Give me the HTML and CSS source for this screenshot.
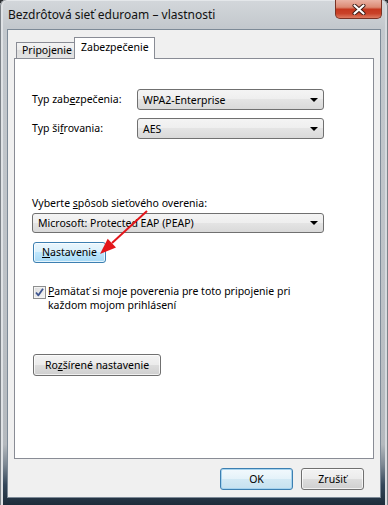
FILE: index.html
```html
<!DOCTYPE html>
<html lang="sk">
<head>
<meta charset="utf-8">
<title>Bezdrôtová sieť eduroam – vlastnosti</title>
<link rel="stylesheet" href="styles.css">
</head>
<body>
<div class="window">
  <div class="titlebar">
    <span class="title">Bezdrôtová sieť eduroam – vlastnosti</span>
    <div class="close">
      <svg width="14" height="11" viewBox="0 0 14 11"><path d="M2.5 1.5 L11.5 9.5 M11.5 1.5 L2.5 9.5" stroke="#3a1a14" stroke-width="4" stroke-linecap="round" fill="none"/><path d="M2.5 1.5 L11.5 9.5 M11.5 1.5 L2.5 9.5" stroke="#ffffff" stroke-width="2.2" stroke-linecap="round" fill="none"/></svg>
    </div>
  </div>
  <div class="client">
    <div class="tabs">
      <div class="tab">Pripojenie</div>
      <div class="tab active">Zabezpečenie</div>
    </div>
    <div class="panel">
      <div class="form-grid">
        <span class="label">Typ zab<u>e</u>zpečenia:</span>
        <div class="select">WPA2-Enterprise<span class="caret"></span></div>
        <span class="label">Typ ši<u>f</u>rovania:</span>
        <div class="select">AES<span class="caret"></span></div>
      </div>
      <div class="auth-label">Vyberte <u>s</u>pôsob sieťového overenia:</div>
      <div class="select wide">Microsoft: Protected EAP (PEAP)<span class="caret"></span></div>
      <div class="btn hot settings"><u>N</u>astavenie</div>
      <div class="check">
        <span class="box"><svg width="11" height="11" viewBox="0 0 11 11"><path d="M2 5.5 L4.4 8.3 L9 1.8" stroke="#3e5590" stroke-width="1.8" fill="none" stroke-linejoin="round"/></svg></span>
        <span class="check-text">
          <span class="line"><u>P</u>amätať si moje poverenia pre toto pripojenie pri</span>
          <span class="line">každom mojom prihlásení</span>
        </span>
      </div>
      <div class="btn advanced">Ro<u>z</u>šírené nastavenie</div>
      <svg class="arrow" width="60" height="56" viewBox="0 0 60 56">
        <path d="M52 7 L17 39" stroke="#e3161b" stroke-width="2" fill="none"/>
        <path d="M5 50 L21 43.6 L12.7 34.8 Z" fill="#e3161b"/>
      </svg>
    </div>
    <div class="actions">
      <div class="btn default ok">OK</div>
      <div class="btn cancel">Zrušiť</div>
    </div>
  </div>
</div>
</body>
</html>
```
FILE: styles.css
```css
html, body {
  margin: 0;
  padding: 0;
  background: #2b2f33;
}
body {
  font-family: "Noto Sans", "Open Sans", sans-serif;
  font-size: 10.5px;
  color: #000;
}
.window {
  width: 388px;
  height: 505px;
  box-sizing: border-box;
  display: flex;
  flex-direction: column;
  border-radius: 6px 6px 0 0;
  background: linear-gradient(to bottom, #d3d7db 0px, #c3c8cd 28px, #bcc1c6 60%, #b4b9be 88%, #7d8893 92%, #34475a 96%, #1d2c3a 100%);
  box-shadow: inset 1px 0 0 #7c8288, inset -1px 0 0 #7c8288, inset 0 1px 0 #e4e7ea, inset 3px 0 0 #dfe2e5, inset -3px 0 0 #d6dade;
}
.titlebar {
  height: 29px;
  display: flex;
  align-items: flex-start;
  padding: 0 6px 0 8px;
  flex-shrink: 0;
}
.title {
  font-size: 12px;
  line-height: 14px;
  padding-top: 8px;
  color: #111;
}
.close {
  margin-left: auto;
  width: 47px;
  height: 19px;
  box-sizing: border-box;
  border: 1px solid #7a3224;
  border-top: none;
  border-radius: 0 0 5px 5px;
  background: linear-gradient(to bottom, #eab2a4 0%, #dc8a74 40%, #c5381f 52%, #c94228 75%, #dd7a60 100%);
  display: flex;
  align-items: center;
  justify-content: center;
}
.client {
  flex: 1;
  margin: 0 7px 7px;
  box-sizing: border-box;
  border: 1px solid #7d8a97;
  background: #f0f0f0;
  padding: 7px 6px 0;
  display: flex;
  flex-direction: column;
}
.tabs {
  display: flex;
  align-items: flex-end;
  height: 22px;
  margin: 0 0 -1px 2px;
}
.tab {
  box-sizing: border-box;
  height: 17px;
  border: 1px solid #898c95;
  border-right: none;
  padding: 0 0 0 5px;
  width: 58px;
  line-height: 15px;
  white-space: nowrap;
  background: linear-gradient(to bottom, #f3f3f3 0%, #ebebeb 50%, #dedede 50%, #e3e3e3 100%);
}
.tab.active {
  position: relative;
  z-index: 1;
  height: 22px;
  width: 81px;
  border-right: 1px solid #898c95;
  border-bottom: none;
  background: #fff;
  padding: 2px 0 0 6px;
  line-height: 15px;
}
.panel {
  position: relative;
  z-index: 0;
  height: 401px;
  box-sizing: border-box;
  border: 1px solid #898c95;
  background: #fff;
  padding: 30px 0 0 17px;
}
.form-grid {
  display: grid;
  grid-template-columns: 105px 187px;
  grid-auto-rows: 21px;
  row-gap: 8px;
  align-items: center;
}
.label {
  line-height: 15px;
}
.select {
  position: relative;
  box-sizing: border-box;
  height: 21px;
  border: 1px solid #707070;
  border-radius: 3px;
  background: linear-gradient(to bottom, #f4f4f4 0%, #eeeeee 50%, #e4e4e4 50%, #d9d9d9 100%);
  padding-left: 5px;
  line-height: 18px;
  display: flex;
  align-items: center;
}
.select.wide {
  width: 292px;
  height: 20px;
  margin-top: 2px;
}
.caret {
  position: absolute;
  right: 5px;
  top: 50%;
  margin-top: -2px;
  width: 0;
  height: 0;
  border-left: 4px solid transparent;
  border-right: 4px solid transparent;
  border-top: 4px solid #000;
}
.auth-label {
  margin-top: 57px;
  line-height: 15px;
}
.btn {
  box-sizing: border-box;
  height: 22px;
  border: 1px solid #707070;
  border-radius: 3px;
  background: linear-gradient(to bottom, #f3f3f3 0%, #ebebeb 50%, #dddddd 50%, #cfcfcf 100%);
  box-shadow: inset 0 0 0 1px rgba(255,255,255,0.7);
  display: flex;
  align-items: center;
  justify-content: center;
  line-height: 15px;
}
.btn.hot {
  border-color: #3c7fb1;
  background: linear-gradient(to bottom, #eaf6fd 0%, #d9f0fc 50%, #bee6fd 50%, #a7d9f5 100%);
}
.settings {
  width: 73px;
  height: 21px;
  margin: 9px 0 0 1px;
}
.check {
  display: flex;
  align-items: flex-start;
  margin: 21px 0 0 1px;
  width: 300px;
}
.box {
  box-sizing: border-box;
  width: 13px;
  height: 13px;
  flex-shrink: 0;
  margin-top: 2px;
  border: 1px solid #8e8f8f;
  background: linear-gradient(135deg, #dcdcdc 0%, #f6f6f6 100%);
  box-shadow: inset 0 0 0 1px #f4f4f4;
  display: flex;
  align-items: center;
  justify-content: center;
}
.check-text {
  display: flex;
  flex-direction: column;
  margin-left: 2px;
  line-height: 14px;
}
.line {
  display: block;
  white-space: nowrap;
}
.advanced {
  width: 128px;
  margin: 42px 0 0 1px;
}
.arrow {
  position: absolute;
  left: 80px;
  top: 145px;
}
.actions {
  display: flex;
  justify-content: flex-end;
  gap: 8px;
  margin: 9px 10px 0 0;
}
.ok {
  width: 73px;
}
.btn.default {
  border-color: #3c7fb1;
  background: linear-gradient(to bottom, #f2f9fd 0%, #e4f2f9 50%, #d3e9f4 50%, #c6e1ef 100%);
  box-shadow: inset 0 0 0 1px #a6d3ee;
}
.cancel {
  width: 63px;
}
u {
  text-decoration: underline;
  text-underline-offset: 1px;
}
```
